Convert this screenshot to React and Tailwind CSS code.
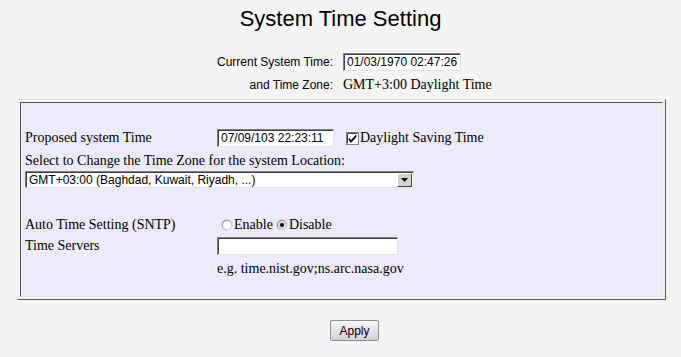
const serif = "font-['Liberation_Serif',_'Times_New_Roman',serif]"
const sans = "font-['Liberation_Sans',Arial,sans-serif]"

function TextBox({ value, className }) {
  return (
    <div
      className={`h-[18px] shrink-0 bg-white border border-t-[#808080] border-l-[#808080] border-b-[#e4e4e4] border-r-[#e4e4e4] shadow-[inset_1px_1px_0_#404040] pl-[3px] flex items-center text-[12px] text-black ${sans} ${className}`}
    >
      {value}
    </div>
  )
}

function CheckBox() {
  return (
    <svg width="13" height="13" viewBox="0 0 13 13" className="shrink-0">
      <rect x="0.5" y="0.5" width="12" height="12" fill="#fff" stroke="#808080" />
      <path d="M1.5 1.5h10M1.5 1.5v10" stroke="#404040" />
      <path d="M3 6 l2 2.5 l5-5.5 v2 l-5 5.5 l-2-2.5z" fill="#000" stroke="#000" strokeWidth="0.6" />
    </svg>
  )
}

function Radio({ on }) {
  return (
    <svg width="12" height="12" viewBox="0 0 12 12" className="shrink-0">
      <defs>
        <linearGradient id={on ? 'rg1' : 'rg0'} x1="0" y1="0" x2="1" y2="1">
          <stop offset="0" stopColor="#8a8a8a" />
          <stop offset="1" stopColor="#f0f0f0" />
        </linearGradient>
      </defs>
      <circle cx="6" cy="6" r="5.5" fill={`url(#${on ? 'rg1' : 'rg0'})`} />
      <circle cx="6" cy="6" r="4" fill={on ? '#d8d8d8' : '#fff'} />
      {on && <circle cx="6" cy="6" r="2" fill="#000" />}
    </svg>
  )
}

export default function App() {
  return (
    <div className="w-[681px] h-[357px] bg-[#f5f4f4] text-black overflow-hidden">
      <h1 className={`pt-[5px] h-[40px] text-center text-[22px] leading-[28px] ${sans}`}>
        System Time Setting
      </h1>

      <div className="grid grid-cols-[333px_1fr] gap-x-[10px] mt-[13px]">
        <div className={`text-right text-[12px] leading-[18px] ${sans}`}>Current System Time:</div>
        <TextBox value="01/03/1970 02:47:26" className="w-[118px]" />
        <div className={`text-right text-[12px] leading-[18px] mt-[5px] ${sans}`}>and Time Zone:</div>
        <div className={`text-[14px] leading-[18px] mt-[5px] ${serif}`}>GMT+3:00 Daylight Time</div>
      </div>

      <div className="ml-[17px] mt-[5px] w-[649px] h-[201px] border border-t-[#e6e6e6] border-l-[#e6e6e6] border-b-[#555] border-r-[#555] p-[2px]">
        <div className={`h-full bg-[#ecebfc] border border-t-[#555] border-l-[#555] border-b-[#e6e6e6] border-r-[#e6e6e6] pl-[4px] pt-[26px] text-[14px] leading-[16px] ${serif}`}>
          <div className="flex items-center h-[18px]">
            <div className="w-[192px] shrink-0">Proposed system Time</div>
            <TextBox value="07/09/103 22:23:11" className="w-[117px]" />
            <div className="flex items-center ml-[12px]">
              <CheckBox />
              <span className="ml-[1px]">Daylight Saving Time</span>
            </div>
          </div>
          <div className="mt-[6px] h-[16px]">Select to Change the Time Zone for the system Location:</div>
          <div className="mt-[2px] w-[389px] h-[17px] bg-white border border-t-[#808080] border-l-[#808080] border-b-[#e4e4e4] border-r-[#e4e4e4] shadow-[inset_1px_1px_0_#404040] flex items-center">
            <div className={`flex-1 pl-[3px] text-[12px] ${sans}`}>GMT+03:00 (Baghdad, Kuwait, Riyadh, ...)</div>
            <div className="w-[15px] h-[14px] mr-[1px] bg-[#d6d3ce] border border-t-[#fff] border-l-[#fff] border-b-[#404040] border-r-[#404040] flex items-center justify-center">
              <svg width="7" height="4" viewBox="0 0 7 4">
                <path d="M0 0h7L3.5 4z" fill="#000" />
              </svg>
            </div>
          </div>
          <div className="flex items-center h-[16px] mt-[29px]">
            <div className="w-[196px] shrink-0">Auto Time Setting (SNTP)</div>
            <Radio />
            <span className="ml-[1px]">Enable</span>
            <span className="ml-[3px] flex"><Radio on /></span>
            <span className="ml-[1px]">Disable</span>
          </div>
          <div className="flex items-center h-[18px] mt-[4px]">
            <div className="w-[192px] shrink-0">Time Servers</div>
            <TextBox value="" className="w-[181px]" />
          </div>
          <div className="pl-[192px] mt-[6px] h-[16px]">e.g. time.nist.gov;ns.arc.nasa.gov</div>
        </div>
      </div>

      <div className="flex justify-center mt-[20px] pl-[28px]">
        <button
          className={`w-[49px] h-[21px] rounded-[2px] border border-[#8e8e9a] bg-gradient-to-b from-[#f6f6f6] to-[#d4d4d8] text-[12px] ${sans}`}
        >
          Apply
        </button>
      </div>
    </div>
  )
}
